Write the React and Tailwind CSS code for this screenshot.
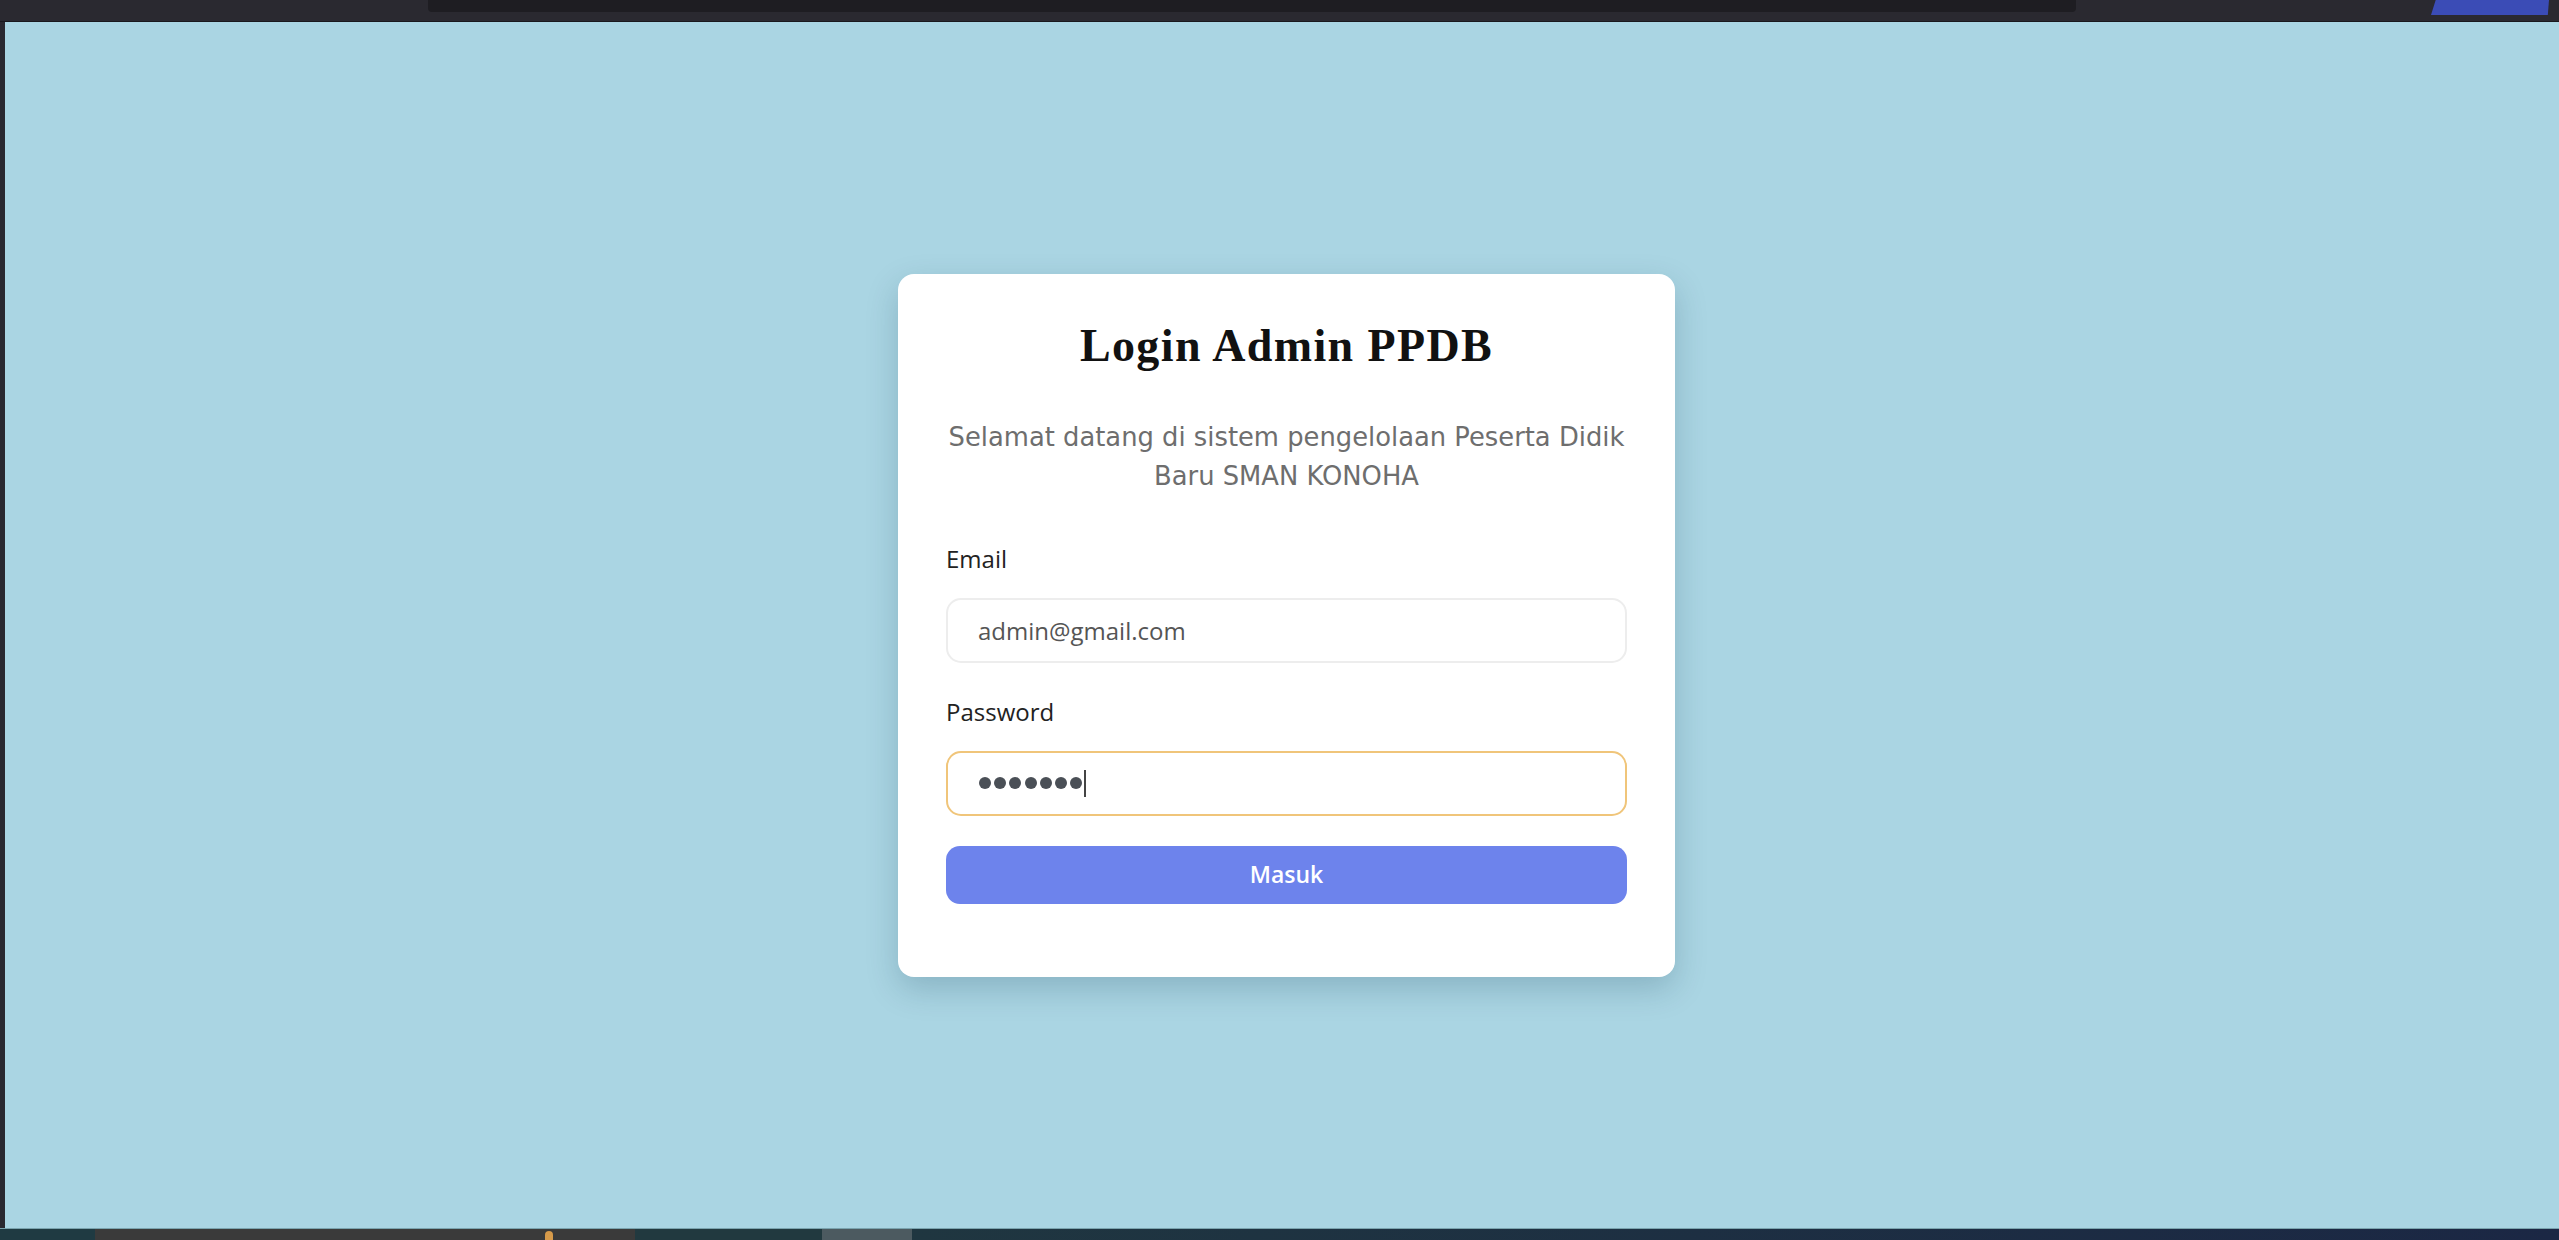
import React from "react";

const sans = "font-['Open_Sans','Liberation_Sans',sans-serif]";

function TopBar() {
  return (
    <div className="flex h-[22px] shrink-0 items-start border-b border-[#19181d] bg-[#2a2930]">
      <div className="ml-[428px] h-[12px] w-[1648px] rounded-b-[4px] bg-[#1e1d22]" />
      <div className="ml-auto mr-[10px] h-[15px] w-[118px] bg-[#3b4cb6] [clip-path:polygon(4%_0,100%_0,99%_100%,0_100%)]" />
    </div>
  );
}

function BottomBar() {
  return (
    <div className="flex h-[12px] shrink-0 border-t border-[#7aa3ae]">
      <div className="w-[95px] bg-[#1f3a42]" />
      <div className="relative w-[540px] bg-[#3a3a3a]">
        <div className="absolute left-[450px] top-[2px] h-[10px] w-[8px] rounded-t-full bg-[#d69a4a]" />
      </div>
      <div className="w-[187px] bg-[#21393f]" />
      <div className="w-[90px] bg-[#4c5a60]" />
      <div className="flex-1 bg-gradient-to-r from-[#1f3640] to-[#1b2744]" />
    </div>
  );
}

function LoginCard() {
  return (
    <div className="flex w-[777px] flex-col rounded-[16px] bg-white px-12 pb-[73px] pt-[45px] shadow-[0_12px_32px_rgba(20,60,80,0.22)]">
      <h1 className="text-center font-['Liberation_Serif',serif] text-[46px] font-bold leading-[54px] tracking-[0.03em] text-[#111]">
        Login Admin PPDB
      </h1>

      <p className="mt-[45px] text-center font-['DejaVu_Sans',sans-serif] text-[25.8px] leading-[39px] text-[#6e6e6e]">
        Selamat datang di sistem pengelolaan Peserta Didik Baru SMAN KONOHA
      </p>

      <label className={`mt-[47px] block text-[24px] font-medium leading-[32px] text-[#222] ${sans}`}>
        Email
      </label>
      <input
        readOnly
        value="admin@gmail.com"
        className={`mt-[23px] h-[65px] w-full rounded-[15px] border-2 border-[#ededed] bg-white px-[30px] text-[24px] text-[#555] outline-none ${sans}`}
      />

      <label className={`mt-[33px] block text-[24px] font-medium leading-[32px] text-[#222] ${sans}`}>
        Password
      </label>
      <div className="mt-[23px] flex h-[65px] w-full items-center rounded-[15px] border-2 border-[#f0c57a] bg-white px-[31px]">
        <div className="flex items-center gap-[3.2px]">
          {Array.from({ length: 7 }).map((_, i) => (
            <span key={i} className="size-[12px] rounded-full bg-[#4a4f56]" />
          ))}
        </div>
        <span className="ml-[2px] h-[27px] w-[2px] bg-[#444]" />
      </div>

      <button className={`mt-[30px] h-[58px] w-full rounded-[14px] bg-[#6d83ec] text-[23px] font-semibold text-white ${sans}`}>
        Masuk
      </button>
    </div>
  );
}

export default function App() {
  return (
    <div className="flex h-[1240px] w-full flex-col overflow-hidden bg-[#aad5e3]">
      <TopBar />
      <div className="flex flex-1">
        <div className="w-[5px] bg-[#2a2930]" />
        <main className="flex flex-1 items-center justify-center pl-[9px]">
          <LoginCard />
        </main>
      </div>
      <BottomBar />
    </div>
  );
}
